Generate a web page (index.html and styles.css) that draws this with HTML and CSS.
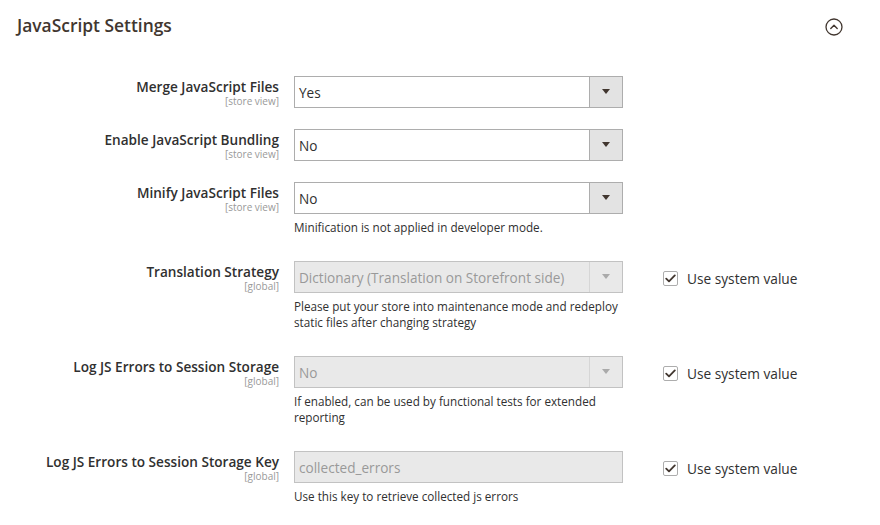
FILE: index.html
```html
<!DOCTYPE html>
<html>
<head>
<meta charset="utf-8">
<link rel="stylesheet" href="styles.css">
</head>
<body>
<div class="section">
  <div class="section-head">
    <h2 class="section-title">JavaScript Settings</h2>
    <span class="collapse-icon">
      <svg width="18" height="18" viewBox="0 0 18 18"><circle cx="9" cy="9" r="8" fill="none" stroke="#41362f" stroke-width="1.3"/><path d="M5.8 10.4 L9 7.3 L12.2 10.4" fill="none" stroke="#41362f" stroke-width="1.4" stroke-linecap="round" stroke-linejoin="round"/></svg>
    </span>
  </div>

  <div class="form">
    <div class="row">
      <div class="label"><span class="label-text">Merge JavaScript Files</span><span class="scope">[store view]</span></div>
      <div class="control">
        <div class="select"><span class="value">Yes</span><span class="arrow"></span></div>
      </div>
      <div class="extra"></div>
    </div>

    <div class="row">
      <div class="label"><span class="label-text">Enable JavaScript Bundling</span><span class="scope">[store view]</span></div>
      <div class="control">
        <div class="select"><span class="value">No</span><span class="arrow"></span></div>
      </div>
      <div class="extra"></div>
    </div>

    <div class="row">
      <div class="label"><span class="label-text">Minify JavaScript Files</span><span class="scope">[store view]</span></div>
      <div class="control">
        <div class="select"><span class="value">No</span><span class="arrow"></span></div>
        <p class="note">Minification is not applied in developer mode.</p>
      </div>
      <div class="extra"></div>
    </div>

    <div class="row">
      <div class="label"><span class="label-text">Translation Strategy</span><span class="scope">[global]</span></div>
      <div class="control">
        <div class="select disabled"><span class="value">Dictionary (Translation on Storefront side)</span><span class="arrow"></span></div>
        <p class="note">Please put your store into maintenance mode and redeploy static files after changing strategy</p>
      </div>
      <div class="extra"><label class="check"><span class="box"><svg width="11" height="9" viewBox="0 0 11 9"><path d="M1.2 4.6 L4 7.3 L9.8 1.4" fill="none" stroke="#41362f" stroke-width="1.8" stroke-linecap="round" stroke-linejoin="round"/></svg></span><span>Use system value</span></label></div>
    </div>

    <div class="row">
      <div class="label"><span class="label-text">Log JS Errors to Session Storage</span><span class="scope">[global]</span></div>
      <div class="control">
        <div class="select disabled"><span class="value">No</span><span class="arrow"></span></div>
        <p class="note">If enabled, can be used by functional tests for extended reporting</p>
      </div>
      <div class="extra"><label class="check"><span class="box"><svg width="11" height="9" viewBox="0 0 11 9"><path d="M1.2 4.6 L4 7.3 L9.8 1.4" fill="none" stroke="#41362f" stroke-width="1.8" stroke-linecap="round" stroke-linejoin="round"/></svg></span><span>Use system value</span></label></div>
    </div>

    <div class="row">
      <div class="label"><span class="label-text">Log JS Errors to Session Storage Key</span><span class="scope">[global]</span></div>
      <div class="control">
        <div class="input disabled"><span class="value">collected_errors</span></div>
        <p class="note">Use this key to retrieve collected js errors</p>
      </div>
      <div class="extra"><label class="check"><span class="box"><svg width="11" height="9" viewBox="0 0 11 9"><path d="M1.2 4.6 L4 7.3 L9.8 1.4" fill="none" stroke="#41362f" stroke-width="1.8" stroke-linecap="round" stroke-linejoin="round"/></svg></span><span>Use system value</span></label></div>
    </div>
  </div>
</div>
</body>
</html>
```

FILE: styles.css
```css
* { box-sizing: border-box; }
html, body { margin: 0; padding: 0; background: #fff; }
body {
  font-family: "Open Sans", "Liberation Sans", sans-serif;
  color: #303030;
  width: 880px;
  height: 525px;
  overflow: hidden;
}
.section { padding: 13px 0 0 17px; }
.section-head {
  display: flex;
  align-items: center;
  justify-content: space-between;
  width: 827px;
  height: 24px;
}
.section-title {
  margin: 0;
  font-size: 17.4px;
  font-weight: 600;
  color: #41362f;
  line-height: 24px;
}
.collapse-icon { display: flex; margin-right: 1px; margin-top: 4px; }

.form {
  margin-top: 39px;
  display: flex;
  flex-direction: column;
  gap: 21px;
}
.row {
  display: grid;
  grid-template-columns: 262px 329px auto;
  column-gap: 15px;
  align-items: start;
}
.label {
  display: flex;
  flex-direction: column;
  align-items: flex-end;
  text-align: right;
  padding-top: 3px;
}
.label-text {
  font-size: 13.6px;
  font-weight: 600;
  line-height: 15px;
  color: #303030;
  white-space: nowrap;
}
.scope {
  font-size: 10px;
  line-height: 12px;
  margin-top: 1px;
  color: #999;
}
.select, .input {
  display: flex;
  align-items: stretch;
  height: 32px;
  border: 1px solid #adadad;
  background: #fff;
  font-size: 13.6px;
}
.value {
  flex: 1;
  display: flex;
  align-items: center;
  padding-left: 4px;
  white-space: nowrap;
  overflow: hidden;
}
.arrow {
  width: 33px;
  border-left: 1px solid #adadad;
  background: #e3e3e3;
  position: relative;
}
.arrow::after {
  content: "";
  position: absolute;
  left: 12px;
  top: 12px;
  border-left: 4px solid transparent;
  border-right: 4px solid transparent;
  border-top: 5px solid #41362f;
}
.disabled { background: #e9e9e9; color: #999; border-color: #c2c2c2; }
.disabled .arrow { background: #e9e9e9; border-left-color: #d6d6d6; }
.disabled .arrow::after { border-top-color: #aaa; }
.note {
  margin: 5px 0 5px;
  font-size: 11.7px;
  line-height: 16px;
  color: #303030;
}
.extra { padding-left: 25px; padding-top: 8px; }
.check {
  display: flex;
  align-items: center;
  gap: 9px;
  font-size: 13.7px;
  color: #303030;
}
.box {
  width: 15px;
  height: 15px;
  border: 1px solid #adadad;
  border-radius: 2px;
  display: flex;
  align-items: center;
  justify-content: center;
  background: #fff;
}
```
